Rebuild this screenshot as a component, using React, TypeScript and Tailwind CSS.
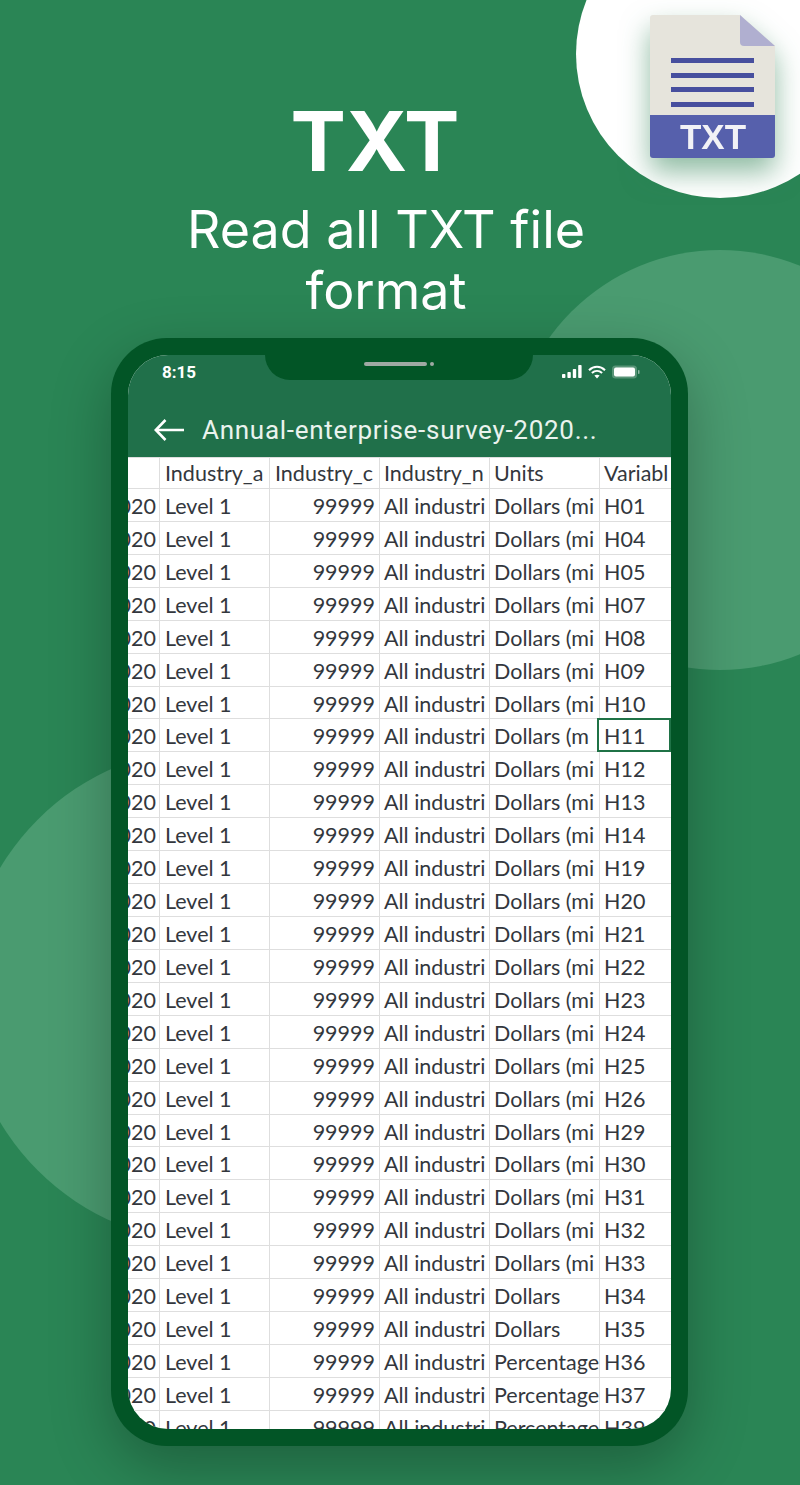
import React from 'react';

const codes = ['H01','H04','H05','H07','H08','H09','H10','H11','H12','H13','H14','H19','H20','H21','H22','H23','H24','H25','H26','H29','H30','H31','H32','H33','H34','H35','H36','H37','H39'];

// the spreadsheet columns are narrow, so only the start of each value shows
const unitsFor = (code: string) => {
  if (code === 'H11') return 'Dollars (m';
  if (code === 'H34' || code === 'H35') return 'Dollars';
  if (code === 'H36' || code === 'H37' || code === 'H39') return 'Percentage';
  return 'Dollars (mi';
};

const cell = 'h-full shrink-0 overflow-hidden whitespace-nowrap leading-[34.5px]';
const head = 'h-full shrink-0 overflow-hidden whitespace-nowrap leading-[30px]';
const line = 'border-r border-[#dedede]';

const FileIcon = () => (
  <svg width="125" height="143" viewBox="0 0 125 143" className="drop-shadow-[0_14px_14px_rgba(30,120,70,0.5)]">
    <path d="M3 0H90L125 31V112H0V3Q0 0 3 0Z" fill="#e6e4dc" />
    <path d="M90 0L125 31H94Q90 31 90 27Z" fill="#b0afd0" />
    <rect x="21" y="43" width="83" height="5" fill="#474f9e" />
    <rect x="21" y="58" width="83" height="5" fill="#474f9e" />
    <rect x="21" y="72" width="83" height="5" fill="#474f9e" />
    <rect x="21" y="87" width="83" height="5" fill="#474f9e" />
    <path d="M0 100H125V140Q125 143 122 143H3Q0 143 0 140Z" fill="#5660ac" />
    <text x="63" y="134" textAnchor="middle" fontFamily="Liberation Sans, sans-serif" fontWeight="700" fontSize="35" fill="#f2f2f6">TXT</text>
  </svg>
);

const StatusIcons = () => (
  <div className="flex items-center gap-[6px]">
    <svg width="20" height="14" viewBox="0 0 20 14" fill="#fff">
      <rect x="0" y="9" width="3.4" height="4" rx="0.8" />
      <rect x="5.4" y="7" width="3.4" height="6" rx="0.8" />
      <rect x="10.8" y="4" width="3.4" height="9" rx="0.8" />
      <rect x="16.2" y="0" width="3.4" height="13" rx="0.8" />
    </svg>
    <svg width="18" height="14" viewBox="0 0 18 14" fill="none" stroke="#fff" strokeWidth="2">
      <path d="M1 5.2C5.6 0.6 12.4 0.6 17 5.2" />
      <path d="M3.9 8C6.9 5.2 11.1 5.2 14.1 8" />
      <path d="M9 13.6L6.4 10.6C7.9 9.6 10.1 9.6 11.6 10.6Z" fill="#fff" stroke="none" />
    </svg>
    <svg width="28" height="14" viewBox="0 0 28 14">
      <rect x="0" y="0.5" width="25" height="13" rx="3.5" fill="#fff" fillOpacity="0.25" />
      <rect x="2" y="2.5" width="21" height="9" rx="2" fill="#fff" />
      <rect x="26" y="5" width="1.5" height="4" rx="0.7" fill="#fff" fillOpacity="0.5" />
    </svg>
  </div>
);

export default function App() {
  return (
    <div className="relative h-[1485px] w-[800px] overflow-hidden bg-[#2a8555] font-['Roboto',sans-serif] text-white">
      {/* background circles */}
      <div className="absolute left-[510px] top-[250px] h-[420px] w-[420px] rounded-full bg-[#4a9b70]" />
      <div className="absolute left-[-35px] top-[747px] h-[496px] w-[496px] rounded-full bg-[#4a9b70]" />
      <div className="absolute left-[576px] top-[-90px] h-[288px] w-[288px] rounded-full bg-white" />
      <div className="absolute left-[650px] top-[15px]">
        <FileIcon />
      </div>

      <div className="relative flex flex-col items-center pt-[91px]">
        <h1 className="mr-[50px] font-['Inter',sans-serif] text-[83px] font-bold leading-[100px]">TXT</h1>
        <p className="mr-[28px] mt-[8px] w-[460px] text-center font-['Inter',sans-serif] text-[52px] leading-[61px]">
          Read all TXT file format
        </p>

        <div className="ml-[-1px] mt-[17px] h-[1108px] w-[577px] rounded-[56px] bg-[#025526] p-[17px] shadow-[0_20px_60px_rgba(0,0,0,0.28)]">
          <div className="relative flex h-full flex-col overflow-hidden rounded-[40px] bg-white">
            <div className="absolute left-[137px] top-0 flex h-[25px] w-[268px] items-start justify-center gap-[3px] rounded-b-[25px] bg-[#025526] pt-[7px]">
              <span className="h-[4px] w-[63px] rounded-full bg-[#9fa9a3]" />
              <span className="h-[4px] w-[4px] rounded-full bg-[#9fa9a3]" />
            </div>
            <div className="flex h-[102px] shrink-0 flex-col bg-[#20704a]">
              <div className="flex h-[26px] items-end justify-between pl-[34px] pr-[31px]">
                <span className="text-[17px] font-bold leading-[18px]">8:15</span>
                <div className="mb-[2px]">
                  <StatusIcons />
                </div>
              </div>
              <div className="flex items-center pl-[26px] pt-[33px]">
                <svg width="30" height="22" viewBox="0 0 30 22" fill="none" stroke="#fff" strokeWidth="2.6">
                  <path d="M30 11H2" />
                  <path d="M11.5 1L1.8 11L11.5 21" />
                </svg>
                <span className="ml-[18px] text-[26px] leading-[32px] tracking-[0.72px] text-[#eaf3ee]">Annual-enterprise-survey-2020...</span>
              </div>
            </div>

            <div className="min-h-0 flex-1 overflow-hidden font-['Lato',sans-serif] text-[21.5px] text-[#33373d]">
              <div className="flex h-[32px] border-y border-[#dedede]">
                <div className={`${head} ${line} w-[32px]`} />
                <div className={`${head} ${line} w-[110px] pl-[5px]`}>Industry_a</div>
                <div className={`${head} ${line} w-[110px] pl-[5px]`}>Industry_c</div>
                <div className={`${head} ${line} w-[110px] pl-[4px]`}>Industry_n</div>
                <div className={`${head} ${line} w-[110px] pl-[4px]`}>Units</div>
                <div className={`${head} w-[71px] pl-[4px]`}>Variabl</div>
              </div>
              {codes.map((code) => (
                <div key={code} className="flex h-[32.93px] border-b border-[#dedede]">
                  <div className={`${cell} ${line} flex w-[32px] justify-end pr-[3px]`}>2020</div>
                  <div className={`${cell} ${line} w-[110px] pl-[5px]`}>Level 1</div>
                  <div className={`${cell} ${line} w-[110px] pr-[4px] text-right`}>99999</div>
                  <div className={`${cell} ${line} w-[110px] pl-[4px]`}>All industri</div>
                  <div className={`${cell} ${line} w-[110px] pl-[4px]`}>{unitsFor(code)}</div>
                  {code === 'H11' ? (
                    <div className="relative z-10 ml-[-3px] mt-[-1px] h-[34px] w-[74px] shrink-0 overflow-hidden whitespace-nowrap border-2 border-[#1f7246] bg-white pl-[5px] leading-[33.5px]">{code}</div>
                  ) : (
                    <div className={`${cell} w-[71px] pl-[4px]`}>{code}</div>
                  )}
                </div>
              ))}
            </div>
          </div>
        </div>
      </div>
    </div>
  );
}
